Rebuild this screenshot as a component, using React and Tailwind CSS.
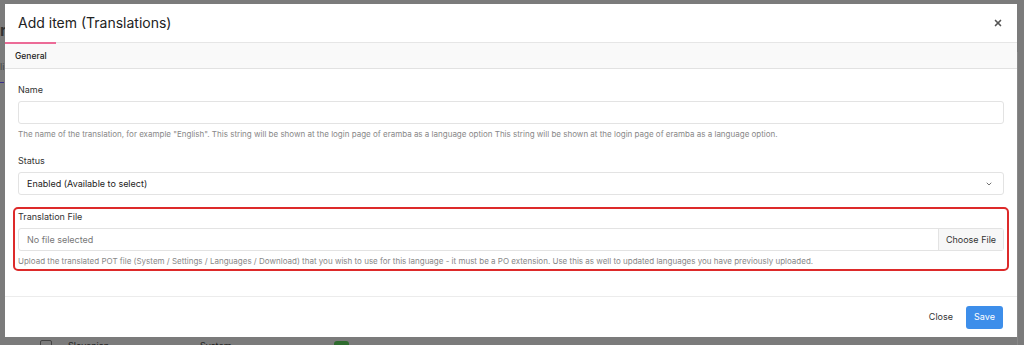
import { ChevronDown, X } from "lucide-react";

const Field = ({ label, help, children }) => (
  <div>
    <p className="text-[9px] text-[#333] mb-[5px] leading-[12px]">{label}</p>
    {children}
    {help && (
      <p className="text-[8px] text-[#888] mt-[5px] leading-[11px]">{help}</p>
    )}
  </div>
);

const App = () => {
  return (
    <div
      className="relative w-[1024px] h-[345px] bg-[#7b7b7b] overflow-hidden"
      style={{ fontFamily: "Inter, 'Noto Sans', sans-serif" }}
    >
      {/* page behind the backdrop */}
      <div className="absolute left-0 top-[18px] text-[16px] text-[#333] font-bold">r</div>
      <div className="absolute left-0 top-[60px] text-[9px] text-[#444]">li</div>
      <div className="absolute left-0 top-[82px] w-[4px] h-px bg-[#3a2f8a]" />
      <div className="absolute left-[1017px] top-[52px] w-px h-[300px] bg-[#888]" />
      <div className="absolute left-[40px] top-[340px] w-[12px] h-[12px] border border-[#444] rounded-[2px]" />
      <div className="absolute left-[68px] top-[339px] text-[9px] text-[#222]">Slovenian</div>
      <div className="absolute left-[200px] top-[339px] text-[9px] text-[#222]">System</div>
      <div className="absolute left-[334px] top-[341px] w-[15px] h-[6px] rounded-full bg-[#2e6b2e]" />

      {/* modal */}
      <div className="absolute left-[5px] top-[4px] w-[1012px] h-[333px] bg-white flex flex-col">
        <div className="h-[39px] flex items-center justify-between pl-[13px] pr-[14px] border-b border-[#e6e6e6]">
          <h2 className="text-[14px] text-[#222] leading-none">Add item (Translations)</h2>
          <X size={10} strokeWidth={4} className="text-[#555]" />
        </div>
        <div className="h-[26px] bg-[#f9f9f9] border-b border-[#e2e2e2] flex">
          <div className="w-[51px] border-t-2 border-[#ec6b97] -mt-px flex items-center pl-[10px]">
            <span className="text-[8.5px] text-[#222] font-medium">General</span>
          </div>
        </div>

        <div className="px-[13px] pt-[15px] flex flex-col gap-[15px]">
          <Field
            label="Name"
            help={`The name of the translation, for example "English". This string will be shown at the login page of eramba as a language option This string will be shown at the login page of eramba as a language option.`}
          >
            <div className="h-[23px] border border-[#e3e3e3] rounded-[3px]" />
          </Field>

          <Field label="Status">
            <div className="h-[23px] border border-[#e3e3e3] rounded-[3px] flex items-center justify-between pl-[8px] pr-[10px]">
              <span className="text-[9px] text-[#222]">Enabled (Available to select)</span>
              <ChevronDown size={8} strokeWidth={2.5} className="text-[#555]" />
            </div>
          </Field>

          <div className="-mx-[5px] -mt-[3px] border-2 border-[#dd2a2a] rounded-[5px] px-[3px] pt-[2px] pb-[2px]">
            <Field
              label="Translation File"
              help="Upload the translated POT file (System / Settings / Languages / Download) that you wish to use for this language - it must be a PO extension. Use this as well to updated languages you have previously uploaded."
            >
              <div className="h-[23px] border border-[#e3e3e3] rounded-[3px] flex">
                <div className="flex-1 flex items-center pl-[8px] text-[9px] text-[#777]">
                  No file selected
                </div>
                <div className="w-[65px] border-l border-[#e3e3e3] bg-[#f7f7f7] flex items-center justify-center text-[9px] text-[#333]">
                  Choose File
                </div>
              </div>
            </Field>
          </div>
        </div>

        <div className="mt-auto h-[41px] border-t border-[#ececec] flex items-center justify-end gap-[13px] pr-[14px]">
          <span className="text-[9px] text-[#333]">Close</span>
          <button className="w-[37px] h-[23px] rounded-[3px] bg-[#3d8eea] text-white text-[9px]">
            Save
          </button>
        </div>
      </div>
    </div>
  );
};

export default App;
